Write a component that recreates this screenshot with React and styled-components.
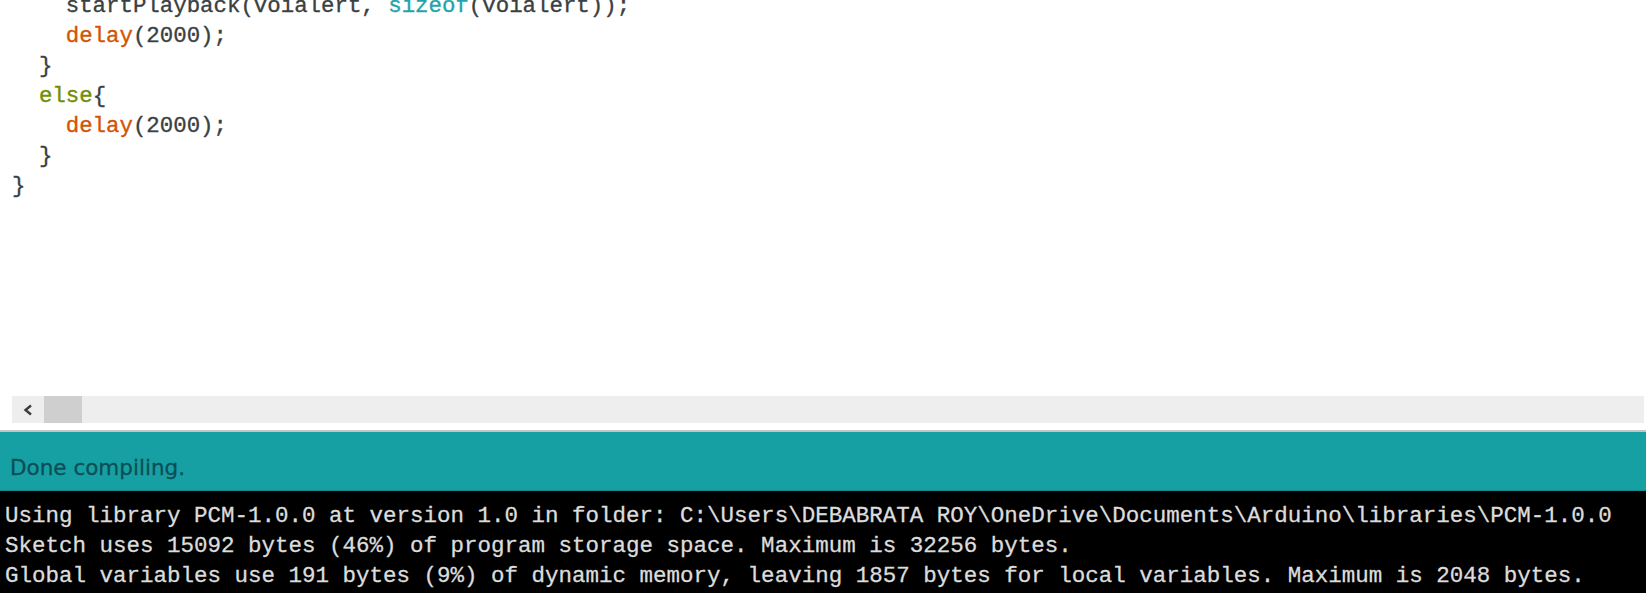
import React from 'react';
import styled, { createGlobalStyle } from 'styled-components';

const GlobalStyle = createGlobalStyle`
  html, body {
    margin: 0;
    padding: 0;
    background: #ffffff;
    overflow: hidden;
  }
`;

const Window = styled.div`
  display: flex;
  flex-direction: column;
  width: 1646px;
  height: 593px;
  background: #ffffff;
`;

const Editor = styled.div`
  flex: 1;
  overflow: hidden;
  padding-left: 12px;
`;

const CodeLines = styled.div`
  margin-top: -9px;
`;

const CodeLine = styled.div`
  height: 30px;
  line-height: 30px;
  white-space: pre;
  font-family: "Liberation Mono", "Courier New", monospace;
  font-size: 22.4px;
  color: #3a3f42;
  -webkit-text-stroke: 0.35px currentColor;
`;

const Token = styled.span`
  color: ${(p) => p.$color};
`;

const HScroll = styled.div`
  display: flex;
  align-items: stretch;
  height: 27px;
  margin: 0 2px 7px 12px;
  background: #eeeeee;
  flex: none;
`;

const ScrollArrow = styled.div`
  width: 32px;
  display: flex;
  align-items: center;
  justify-content: center;
  color: #3c3c3c;
`;

const ScrollThumb = styled.div`
  width: 38px;
  background: #cfcfcf;
`;

const Divider = styled.div`
  height: 2px;
  background: #c4c6c6;
  flex: none;
`;

const StatusBar = styled.div`
  height: 59px;
  flex: none;
  display: flex;
  align-items: center;
  padding: 13px 0 0 10px;
  box-sizing: border-box;
  background: #17a0a4;
  border-bottom: 1px solid #128a8e;
  font-family: "DejaVu Sans", "Liberation Sans", sans-serif;
  font-size: 21.5px;
  color: #0b4e57;
  -webkit-text-stroke: 0.3px currentColor;
`;

const Console = styled.div`
  flex: none;
  height: 102px;
  box-sizing: border-box;
  padding: 10px 0 0 5px;
  background: #000000;
  overflow: hidden;
`;

const ConsoleLine = styled.div`
  height: 30px;
  line-height: 30px;
  white-space: pre;
  font-family: "Liberation Mono", "Courier New", monospace;
  font-size: 22.5px;
  color: #dcdcdc;
  -webkit-text-stroke: 0.3px currentColor;
`;

const ORANGE = '#d35400';
const TEAL = '#1fa4ad';
const OLIVE = '#728e00';

const code = [
  ['    ', ['startPlayback(voialert, '], [TEAL, 'sizeof'], ['(voialert));']],
  ['    ', [ORANGE, 'delay'], ['(2000);']],
  ['  ', ['}']],
  ['  ', [OLIVE, 'else'], ['{']],
  ['    ', [ORANGE, 'delay'], ['(2000);']],
  ['  ', ['}']],
  ['', ['}']],
];

const output = [
  'Using library PCM-1.0.0 at version 1.0 in folder: C:\\Users\\DEBABRATA ROY\\OneDrive\\Documents\\Arduino\\libraries\\PCM-1.0.0',
  'Sketch uses 15092 bytes (46%) of program storage space. Maximum is 32256 bytes.',
  'Global variables use 191 bytes (9%) of dynamic memory, leaving 1857 bytes for local variables. Maximum is 2048 bytes.',
];

export default function App() {
  return (
    <>
      <GlobalStyle />
      <Window>
        <Editor>
          <CodeLines>
            {code.map(([indent, ...parts], i) => (
              <CodeLine key={i}>
                {indent}
                {parts.map((part, j) =>
                  part.length === 2 ? (
                    <Token key={j} $color={part[0]}>{part[1]}</Token>
                  ) : (
                    <span key={j}>{part[0]}</span>
                  )
                )}
              </CodeLine>
            ))}
          </CodeLines>
        </Editor>
        <HScroll>
          <ScrollArrow>
            <svg width="10" height="12" viewBox="0 0 10 12">
              <path d="M8 1.5 L2.5 6 L8 10.5" fill="none" stroke="currentColor" strokeWidth="2.4" />
            </svg>
          </ScrollArrow>
          <ScrollThumb />
        </HScroll>
        <Divider />
        <StatusBar>Done compiling.</StatusBar>
        <Console>
          {output.map((line, i) => (
            <ConsoleLine key={i}>{line}</ConsoleLine>
          ))}
        </Console>
      </Window>
    </>
  );
}
